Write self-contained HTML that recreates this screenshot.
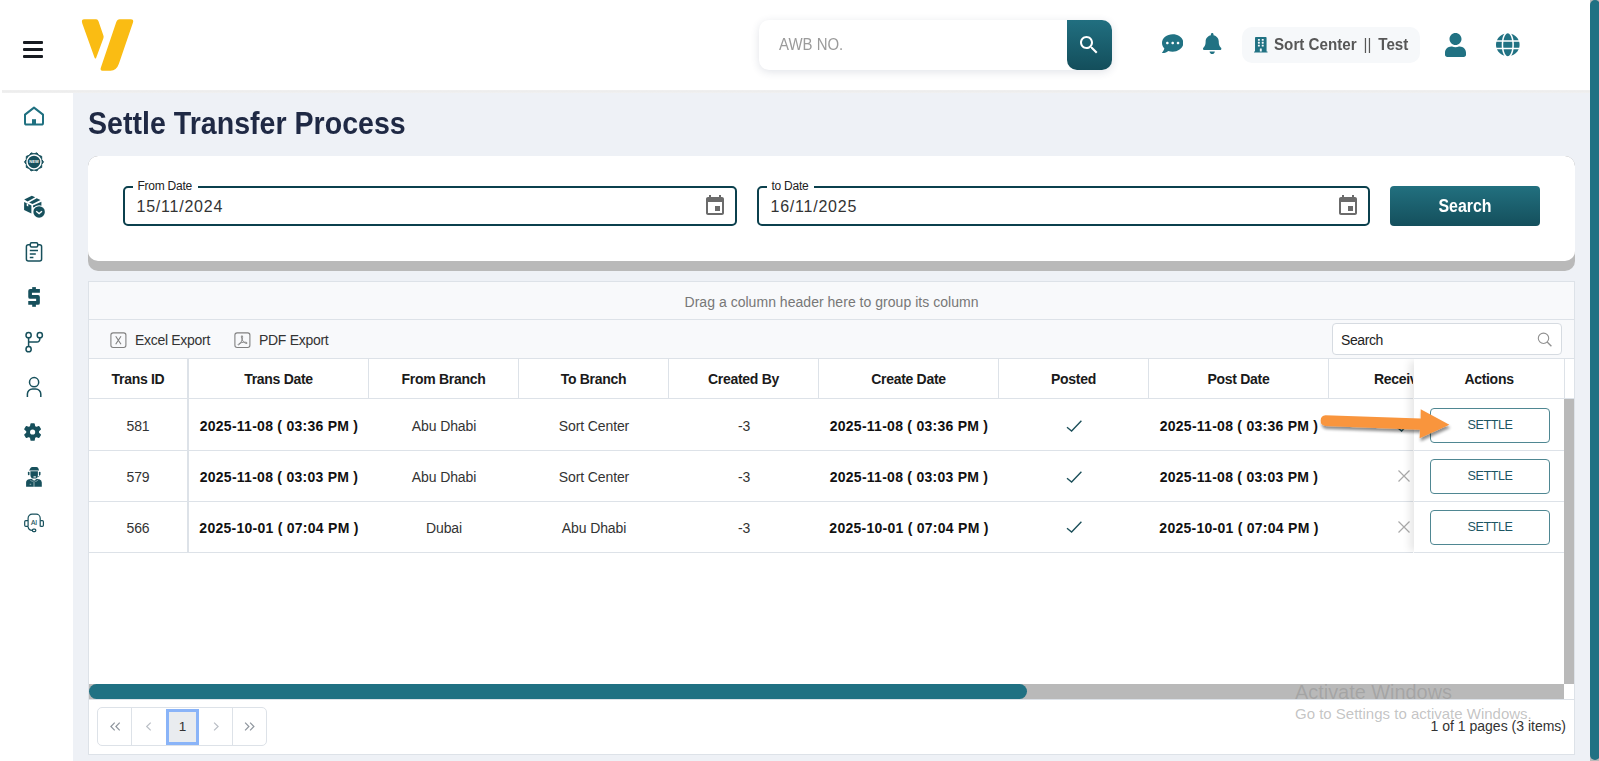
<!DOCTYPE html>
<html lang="en">
<head>
<meta charset="utf-8">
<title>Settle Transfer Process</title>
<style>
*{box-sizing:border-box;margin:0;padding:0}
html,body{width:1599px;height:761px;overflow:hidden}
body{position:relative;background:#eef1f6;font-family:"Liberation Sans",sans-serif;color:#222}
.abs{position:absolute}
/* header */
#hdr{position:absolute;left:0;top:0;width:1590px;height:90px;background:#fff;z-index:3}#hline{position:absolute;left:2px;top:90px;width:1588px;height:3px;background:linear-gradient(#f0f0f0,#ededed 45%,#f1f1f1);z-index:3}
#side{position:absolute;left:0;top:90px;width:73px;height:671px;background:#fff;z-index:2}
#side svg{position:absolute}
.bar{position:absolute;left:23px;width:20px;height:3px;background:#171b21;border-radius:1px}
#awb{position:absolute;left:759px;top:20px;width:353px;height:50px;background:#fff;border-radius:10px;box-shadow:0 2px 8px rgba(40,60,90,.14)}
#awb span{position:absolute;left:20px;top:15px;font-size:17px;color:#9b9b9b;line-height:20px;transform:scaleX(.88);transform-origin:0 50%;white-space:nowrap}
#awbbtn{position:absolute;left:1067px;top:20px;width:45px;height:50px;border-radius:0 10px 10px 10px;background:linear-gradient(#216f80,#134e5b)}
#pill{position:absolute;left:1242px;top:27px;width:178px;height:36px;border-radius:10px;background:#f6f8fa}
#pill span{position:absolute;left:32px;top:8px;font-size:17px;font-weight:bold;color:#575757;line-height:20px;white-space:nowrap;transform:scaleX(.892);transform-origin:0 50%}#pill span b{font-weight:normal;padding:0 3px}
/* page scroll */
#pscroll{position:absolute;left:1590px;top:0;width:9px;height:761px;background:#b9b9b9;z-index:5}
#pscroll i{position:absolute;left:0;top:0;width:10px;height:760px;background:#207183;border-radius:5px}
h1{position:absolute;left:88px;top:105px;font-size:31px;line-height:38px;font-weight:bold;color:#1f2944;white-space:nowrap;transform:scaleX(.922);transform-origin:0 50%}
/* filter card */
#card{position:absolute;left:88px;top:156px;width:1487px;height:115px;background:#b9b9b9;border-radius:10px;overflow:hidden}
#card>i{position:absolute;left:0;top:0;width:100%;height:105px;background:#fff;border-radius:10px 10px 10px 10px}
.fld{position:absolute;top:186px;height:40px;border:2px solid #0b404d;border-radius:5px;background:#fff}
.fld label{position:absolute;left:8px;top:-9px;padding:0 6px 0 4.5px;letter-spacing:-.25px;background:#fff;font-size:12px;line-height:14px;color:#222;white-space:nowrap}
.fld span{position:absolute;left:11.5px;top:9px;font-size:16px;line-height:20px;color:#333;letter-spacing:.77px}
.fld svg{position:absolute;right:8px;top:6px}
#sbtn{position:absolute;left:1390px;top:186px;width:150px;height:40px;border-radius:4px;background:linear-gradient(#22707f,#144f5c);color:#fff;font-weight:bold;font-size:18px;text-align:center;line-height:40px}#sbtn span{display:inline-block;transform:scaleX(.885)}
/* grid */
#grid{position:absolute;left:88px;top:281px;width:1487px;height:474px;background:#fff;border:1px solid #dde2e8}
#grp{position:absolute;left:0;top:0;width:1485px;height:38px;background:#f8f9fb;border-bottom:1px solid #dde2e8;text-align:center;font-size:14px;letter-spacing:.03px;line-height:40px;color:#777}
#tb{position:absolute;left:0;top:38px;width:1485px;height:39px;background:#f8f9fb;border-bottom:1px solid #dde2e8}
.tbt{position:absolute;top:11px;letter-spacing:-.3px;font-size:14px;line-height:18px;color:#333;white-space:nowrap}
#srch{position:absolute;left:1243px;top:3px;width:230px;height:32px;border:1px solid #d6dbe1;border-radius:4px;background:#fff}
#srch span{position:absolute;left:8px;top:7px;letter-spacing:-.4px;font-size:14px;line-height:18px;color:#222}
.hc{position:absolute;top:77px;height:40px;border-right:1px solid #dde2e8;border-bottom:1px solid #dde2e8;font-weight:bold;letter-spacing:-.3px;font-size:14px;line-height:40px;text-align:center;color:#1a1a1a;white-space:nowrap;overflow:hidden}
.c{position:absolute;height:51px;border-bottom:1px solid #dde2e8;font-size:14px;line-height:54px;text-align:center;color:#333;white-space:nowrap;overflow:hidden}
.c{letter-spacing:-.12px}.c.b{font-weight:bold;color:#111;letter-spacing:.26px}
.set{position:absolute;left:1342px;width:120px;height:35px;border:1px solid #4f8792;border-radius:4px;font-size:12.6px;letter-spacing:-.4px;line-height:33px;text-align:center;color:#1c5663;background:#fff}

#tbl{position:absolute;left:0;top:0;width:1324px;height:402px;overflow:hidden}
.hc{top:77px}
.fx{border-right:2px solid #dde2e8 !important}
.c .ic{position:absolute;line-height:0}
#act{position:absolute;left:1325px;top:77px;width:150px;height:194px;background:#fff;box-shadow:-6px 0 8px -2px rgba(0,0,0,.10);clip-path:inset(0 0 0 -14px)}
#act .ah{position:absolute;left:0;top:0;width:150px;height:40px;border-bottom:1px solid #dde2e8;font-weight:bold;letter-spacing:-.3px;font-size:14px;line-height:40px;text-align:center;color:#1a1a1a}
#act .ar{position:absolute;left:0;width:150px;border-bottom:1px solid #dde2e8}
#act .set{left:16px}
#hfill{position:absolute;left:1475px;top:77px;width:10px;height:40px;border-left:1px solid #dde2e8;border-bottom:1px solid #dde2e8;background:#fff}
#vs{position:absolute;left:1475px;top:117px;width:10px;height:285px;background:#b9b9b9}
#hs{position:absolute;left:0;top:402px;width:1475px;height:15px;background:#b9b9b9}#pgline{position:absolute;left:0;top:417px;width:1485px;height:1px;background:#dde2e8}
#hs i{position:absolute;left:0;top:0;width:938px;height:15px;border-radius:8px;background:#207183}
#pager{position:absolute;left:8px;top:425px;width:170px;height:39px;border:1px solid #dde2e8;border-radius:5px;background:#fff}
.dv{position:absolute;top:0;width:1px;height:37px;background:#dde2e8}.pg{position:absolute;top:0;width:34px;height:37px;text-align:center;line-height:35px;font-weight:normal;font-size:17px;color:#9aa0a6}
.pg.on{top:1px;width:33px;height:36px;border:3px solid #8ab4f8;background:#e9ecef;color:#333;font-size:13.5px;line-height:30px}
#pinfo{position:absolute;right:8px;top:435px;font-size:14px;line-height:18px;color:#333;white-space:nowrap}

#wm{position:absolute;left:1295px;top:680px;z-index:6;color:rgba(105,105,105,.40);white-space:nowrap}
#wm .w1{font-size:19.900px;line-height:24px;color:rgba(90,90,90,.22)}
#wm .w2{font-size:15px;line-height:20px;margin-top:0px}
</style>
</head>
<body>
<div id="hdr">
  <div class="bar" style="top:40.700px"></div><div class="bar" style="top:47.800px"></div><div class="bar" style="top:54.900px"></div>
  <svg class="abs" style="left:70px;top:10px" width="80" height="70" viewBox="70 10 80 70"><g fill="#fabc13"><path d="M84.300 19.200 L96.200 19.200 Q97.800 19.200 98.500 21.300 L103.400 35.600 Q103.900 36.900 103.400 38.200 L96.300 57.400 Q95.300 59.800 94.400 57.300 L82.300 23.400 Q80.900 19.200 84.300 19.200 Z"/><path d="M119.700 19.200 L130.700 19.200 Q134 19.200 133 22.600 L118.900 63.800 Q116.500 70.700 110.500 70.700 L102.400 70.700 Q99.800 70.700 100.900 67.600 L116.200 22.300 Q117.200 19.200 119.700 19.200 Z"/></g></svg>
  <div id="awb"><span>AWB NO.</span></div>
  <div id="awbbtn"></div>

  <svg class="abs" style="left:1076.500px;top:33.300px" width="24" height="24" viewBox="0 0 24 24"><path fill="#fff" d="M15.5 14h-.79l-.28-.27C15.41 12.590 16 11.110 16 9.500 16 5.910 13.090 3 9.500 3S3 5.910 3 9.500 5.910 16 9.500 16c1.610 0 3.090-.590 4.230-1.570l.27.280v.79l5 4.990L20.490 19l-4.990-5zm-6 0C7.010 14 5 11.990 5 9.500S7.010 5 9.500 5 14 7.010 14 9.500 11.990 14 9.500 14z"/></svg>
  <svg class="abs" style="left:1161.900px;top:32.700px" width="21.400" height="21.400" viewBox="0 0 512 512"><path fill="#217283" d="M256 32C114.6 32 0 125.1 0 240c0 49.6 21.4 95 57 130.7C44.500 421.100 2.700 466 2.200 466.500c-2.200 2.300-2.800 5.700-1.500 8.700S4.800 480 8 480c66.300 0 116-31.800 140.600-51.400 32.700 12.300 69 19.400 107.400 19.400 141.400 0 256-93.100 256-208S397.400 32 256 32zM128 272c-17.700 0-32-14.300-32-32s14.300-32 32-32 32 14.300 32 32-14.300 32-32 32zm128 0c-17.700 0-32-14.300-32-32s14.300-32 32-32 32 14.300 32 32-14.300 32-32 32zm128 0c-17.700 0-32-14.300-32-32s14.300-32 32-32 32 14.300 32 32-14.300 32-32 32z"/></svg>
  <svg class="abs" style="left:1203.300px;top:32.700px" width="18.400" height="21" viewBox="0 0 448 512"><path fill="#217283" d="M224 512c35.320 0 63.970-28.650 63.970-64H160.030c0 35.350 28.650 64 63.970 64zm215.390-149.710c-19.320-20.760-55.470-51.990-55.470-154.290 0-77.700-54.480-139.900-127.940-155.160V32c0-17.670-14.320-32-31.980-32s-31.980 14.330-31.980 32v20.840C118.560 68.100 64.080 130.300 64.080 208c0 102.300-36.150 133.530-55.470 154.290-6 6.450-8.660 14.160-8.610 21.710.110 16.400 12.980 32 32.100 32h383.800c19.120 0 32-15.600 32.100-32 .050-7.550-2.610-15.270-8.610-21.710z"/></svg>
  <svg class="abs" style="left:1444.900px;top:32.800px" width="21" height="24" viewBox="0 0 448 512"><path fill="#217283" d="M224 256c70.700 0 128-57.300 128-128S294.700 0 224 0 96 57.300 96 128s57.300 128 128 128zm89.600 32h-16.700c-22.200 10.200-46.900 16-72.900 16s-50.600-5.800-72.900-16h-16.700C60.200 288 0 348.200 0 422.400V464c0 26.500 21.500 48 48 48h352c26.500 0 48-21.500 48-48v-41.600c0-74.200-60.200-134.400-134.400-134.400z"/></svg>
  <svg class="abs" style="left:1496.400px;top:33.400px" width="23.600" height="23.600" viewBox="0 0 496 512" preserveAspectRatio="none"><path fill="#217283" d="M336.500 160C322 70.700 287.800 8 248 8s-74 62.700-88.500 152h177zM152 256c0 22.200 1.200 43.500 3.300 64h185.300c2.100-20.500 3.300-41.800 3.300-64s-1.200-43.500-3.300-64H155.300c-2.100 20.500-3.300 41.800-3.300 64zm324.700-96c-28.600-67.900-86.500-120.400-158-141.600 24.400 33.800 41.200 84.700 50 141.600h108zM177.200 18.400C105.800 39.600 47.800 92.100 19.300 160h108c8.700-56.900 25.500-107.800 49.900-141.600zM487.400 192H372.700c2.100 21 3.300 42.500 3.300 64s-1.200 43-3.300 64h114.600c5.500-20.500 8.600-41.800 8.600-64s-3.100-43.500-8.500-64zM120 256c0-21.500 1.200-43 3.300-64H8.600C3.200 212.500 0 233.800 0 256s3.200 43.500 8.600 64h114.600c-2-21-3.200-42.500-3.200-64zm39.500 96c14.500 89.300 48.700 152 88.500 152s74-62.700 88.500-152h-177zm159.300 141.600c71.400-21.200 129.400-73.700 158-141.600h-108c-8.800 56.900-25.600 107.800-50 141.600zM19.300 352c28.600 67.900 86.500 120.400 158 141.600-24.400-33.800-41.200-84.700-50-141.600h-108z"/></svg>
  <div id="pill"><span>Sort Center <b>||</b> Test</span></div>
  <svg class="abs" style="left:1254.400px;top:37.300px" width="13.600" height="15.400" viewBox="0 0 448 512"><path fill="#217283" d="M436 480h-20V24c0-13.255-10.745-24-24-24H56C42.745 0 32 10.745 32 24v456H12c-6.627 0-12 5.373-12 12v20h448v-20c0-6.627-5.373-12-12-12zM128 76c0-6.627 5.373-12 12-12h40c6.627 0 12 5.373 12 12v40c0 6.627-5.373 12-12 12h-40c-6.627 0-12-5.373-12-12V76zm0 96c0-6.627 5.373-12 12-12h40c6.627 0 12 5.373 12 12v40c0 6.627-5.373 12-12 12h-40c-6.627 0-12-5.373-12-12v-40zm52 148h-40c-6.627 0-12-5.373-12-12v-40c0-6.627 5.373-12 12-12h40c6.627 0 12 5.373 12 12v40c0 6.627-5.373 12-12 12zm76 160h-64v-84c0-6.627 5.373-12 12-12h40c6.627 0 12 5.373 12 12v84zm64-172c0 6.627-5.373 12-12 12h-40c-6.627 0-12-5.373-12-12v-40c0-6.627 5.373-12 12-12h40c6.627 0 12 5.373 12 12v40zm0-96c0 6.627-5.373 12-12 12h-40c-6.627 0-12-5.373-12-12v-40c0-6.627 5.373-12 12-12h40c6.627 0 12 5.373 12 12v40zm0-96c0 6.627-5.373 12-12 12h-40c-6.627 0-12-5.373-12-12V76c0-6.627 5.373-12 12-12h40c6.627 0 12 5.373 12 12v40z"/></svg>
</div>
<div id="hline"></div>
<div id="side">
<svg id="sideic" width="73" height="671" viewBox="0 90 73 671" style="position:absolute;left:0;top:0">
<path d="M25 114.6 L34 107.6 L43 114.6 V123 a1.6 1.6 0 0 1 -1.6 1.6 H26.6 a1.6 1.6 0 0 1 -1.6 -1.6 Z" fill="none" stroke="#1f7080" stroke-width="2" stroke-linejoin="round"/><rect x="32" y="119.2" width="4" height="5" fill="#1f7080"/>
<path d="M43.50 161.90 L41.70 164.40 L41.69 167.48 L38.76 168.45 L36.94 170.94 L34.00 170.00 L31.06 170.94 L29.24 168.45 L26.31 167.48 L26.30 164.40 L24.50 161.90 L26.30 159.40 L26.31 156.32 L29.24 155.35 L31.06 152.86 L34.00 153.80 L36.94 152.86 L38.76 155.35 L41.69 156.32 L41.70 159.40Z" fill="#17505c" stroke="#17505c" stroke-width="1" stroke-linejoin="round"/>
<circle cx="34" cy="161.9" r="7" fill="none" stroke="#fff" stroke-width="1.45"/>
<text x="34" y="162.9" font-family="Liberation Sans, sans-serif" font-weight="bold" font-size="4.4" fill="#fff" text-anchor="middle" textLength="9.4" lengthAdjust="spacingAndGlyphs">NEW</text>
<g fill="#17505c"><path d="M24.2 199.5 L31.8 195.7 L35.2 197.3 L27.6 201.5 Z"/><path d="M29.1 202.4 L36.7 198.3 L40.5 199.9 L32.5 204.1 Z"/><path d="M24.1 202 L31.4 205.4 V213.5 L24.1 210.1 Z"/><path d="M33 205.4 L41.4 201.8 V206 L37 206 L33.1 207.4 Z"/></g>
<path d="M26.7 203.2 L28.25 203.9 V206.4 L26.7 205.8 Z" fill="#fff"/>
<circle cx="39.1" cy="211.9" r="6.6" fill="#fff"/><circle cx="39.1" cy="211.9" r="5.75" fill="#17505c"/><path d="M36.2 211.2 L39.1 213.6 L42 211.2" fill="none" stroke="#fff" stroke-width="1.35"/>
<g fill="none" stroke="#17505c" stroke-width="1.5"><rect x="26.4" y="244.8" width="15.2" height="16.2" rx="2"/><rect x="30.3" y="242.8" width="7.4" height="4.2" rx="1.2" fill="#fff"/><path d="M29.8 250.6 H38 M29.8 254.1 H35.8 M29.8 257.6 H33.4"/></g>
<path d="M39.9 290.95 H30.1 V296.95 H38 V302.95 H28.25" fill="none" stroke="#17505c" stroke-width="3.7" stroke-linejoin="round"/><rect x="32.2" y="287.1" width="3.7" height="3" fill="#17505c"/><rect x="32.2" y="303.8" width="3.7" height="3" fill="#17505c"/>
<g fill="none" stroke="#17505c" stroke-width="1.5"><circle cx="28.6" cy="335.2" r="2.6"/><circle cx="39.8" cy="335.2" r="2.6"/><circle cx="28.6" cy="349.2" r="2.6"/><path d="M28.6 337.8 V346.6 M28.6 342 H37 a2.8 2.8 0 0 0 2.8 -2.8 V337.8"/></g>
<g fill="none" stroke="#17505c" stroke-width="1.5"><circle cx="34.1" cy="382.2" r="4.6"/><path d="M27.4 397 V394 a5 5 0 0 1 5 -5 H35.8 a5 5 0 0 1 5 5 V397"/></g>
<path d="M30.75 426.61 L31.23 424.02 L33.97 424.02 L34.45 426.61 L36.35 427.70 L38.83 426.82 L40.20 429.20 L38.19 430.90 L38.19 433.10 L40.20 434.80 L38.83 437.18 L36.35 436.30 L34.45 437.39 L33.97 439.98 L31.23 439.98 L30.75 437.39 L28.85 436.30 L26.37 437.18 L25.00 434.80 L27.01 433.10 L27.01 430.90 L25.00 429.20 L26.37 426.82 L28.85 427.70Z" fill="#17505c" stroke="#17505c" stroke-width="1.6" stroke-linejoin="round"/><circle cx="32.6" cy="432.0" r="2.6" fill="#fff"/>
<g fill="#17505c"><path d="M29.1 470.4 L30.5 468 Q31.1 466.9 32.4 466.9 H36.3 Q37.6 466.9 38.2 468 L39.1 470.4 Z"/><path d="M30.4 471.3 H37.9 V474.9 a3.75 3.6 0 0 1 -7.5 0 Z"/><rect x="27.9" y="471.8" width="1.6" height="3.5" rx=".7"/><rect x="38.9" y="471.8" width="1.6" height="3.5" rx=".7"/><path d="M26.1 486.8 V482.6 Q26.1 479.9 28.8 479.3 L31.5 478.7 L34.1 480.7 L36.700 478.700 L39.300 479.300 Q41.800 479.900 41.800 482.600 V486.800 Z"/></g>
<path d="M34 481.400 V486.800" stroke="#fff" stroke-opacity=".55" stroke-width="1" fill="none"/><path d="M30 479.600 Q31 481.700 33.200 481.300 M38.200 479.600 Q37.200 481.700 35 481.300" stroke="#fff" stroke-opacity=".7" stroke-width=".6" fill="none"/><path d="M39.700 475.300 Q39.500 477.200 36.200 477" stroke="#17505c" stroke-width=".7" fill="none"/><rect x="33.400" y="476.200" width="2.600" height="1.300" rx=".5" fill="#fff" fill-opacity=".85"/><rect x="29.700" y="483.800" width="1.500" height=".9" fill="#fff" fill-opacity=".6"/>
<g fill="none" stroke="#17505c" stroke-width="1.2"><path d="M28.1 526.8 V518.2 a4 4 0 0 1 4 -4 H36.2 a4 4 0 0 1 4 4 V526.6"/><path d="M28 520.700 H25.800 a1.100 1.100 0 0 0 -1.100 1.100 V525.300 a1.100 1.100 0 0 0 1.100 1.100 H28 M40.300 520.700 H42.300 a1.100 1.100 0 0 1 1.100 1.100 V525.300 a1.100 1.100 0 0 1 -1.100 1.100 H40.300"/><path d="M28.100 526.800 Q28.600 530.300 32.300 530.400"/><rect x="32.400" y="529.200" width="3.400" height="2.400" rx="1"/></g>
<text x="34.100" y="524.700" font-family="Liberation Sans, sans-serif" font-size="6.600" fill="#17505c" stroke="#17505c" stroke-width=".15" text-anchor="middle">AI</text>
</svg>
</div>
<div id="pscroll"><i></i></div>
<h1>Settle Transfer Process</h1>
<div id="card"><i></i></div>
<div class="fld" style="left:123px;width:614px"><label>From Date</label><span>15/11/2024</span><svg width="24" height="24" viewBox="0 0 24 24"><path fill="#6b6b6b" d="M17 12h-5v5h5v-5zM16 1v2H8V1H6v2H5c-1.110 0-1.990.9-1.990 2L3 19c0 1.100.890 2 2 2h14c1.100 0 2-.9 2-2V5c0-1.100-.9-2-2-2h-1V1h-2zm3 18H5V8h14v11z"/></svg></div>
<div class="fld" style="left:757px;width:613px"><label>to Date</label><span>16/11/2025</span><svg width="24" height="24" viewBox="0 0 24 24"><path fill="#6b6b6b" d="M17 12h-5v5h5v-5zM16 1v2H8V1H6v2H5c-1.110 0-1.990.9-1.990 2L3 19c0 1.100.890 2 2 2h14c1.100 0 2-.9 2-2V5c0-1.100-.9-2-2-2h-1V1h-2zm3 18H5V8h14v11z"/></svg></div>
<div id="sbtn"><span>Search</span></div>
<div id="grid">
  <div id="grp">Drag a column header here to group its column</div>
  <div id="tb">
    <svg class="abs" style="left:21px;top:12px" width="17" height="17" viewBox="0 0 17 17"><rect x=".9" y=".9" width="15" height="14.600" rx="2.200" fill="none" stroke="#808080" stroke-width="1.100"/><path d="M5.700 4.200 L11 12.300 M11 4.200 L5.700 12.300" stroke="#808080" stroke-width="1.100" fill="none"/></svg><svg class="abs" style="left:145px;top:12px" width="17" height="17" viewBox="0 0 17 17"><rect x=".9" y=".9" width="15" height="14.600" rx="2.200" fill="none" stroke="#808080" stroke-width="1.100"/><path d="M7.900 3.600 c-1 .2 -.6 2.200 .4 4.400 c1 2.200 3.600 3.900 4.700 3.400 c.9 -.6 -.8 -1.500 -3.300 -1.200 c-2.500 .3 -5.300 1.300 -5.600 2.300 c-.1 1 1.400 .3 2.600 -1.700 c1.300 -2.200 2.300 -5.400 1.800 -6.700 c-.1 -.4 -.4 -.5 -.6 -.5z" fill="none" stroke="#808080" stroke-width=".9"/></svg><span class="tbt" style="left:46px">Excel Export</span>
    <span class="tbt" style="left:170px">PDF Export</span>
    <div id="srch"><span>Search</span><svg class="abs" style="left:203px;top:7px" width="18" height="18" viewBox="0 0 18 18"><circle cx="7.500" cy="7.300" r="5.200" fill="none" stroke="#909090" stroke-width="1.100"/><path d="M11.200 11 L15.400 15.200" stroke="#909090" stroke-width="1.300"/></svg></div>
  </div>
<div id="tbl">
<div class="hc fx" style="left:0px;width:100px"><span>Trans ID</span></div>
<div class="hc" style="left:100px;width:180px"><span>Trans Date</span></div>
<div class="hc" style="left:280px;width:150px"><span>From Branch</span></div>
<div class="hc" style="left:430px;width:150px"><span>To Branch</span></div>
<div class="hc" style="left:580px;width:150px"><span>Created By</span></div>
<div class="hc" style="left:730px;width:180px"><span>Create Date</span></div>
<div class="hc" style="left:910px;width:150px"><span>Posted</span></div>
<div class="hc" style="left:1060px;width:180px"><span>Post Date</span></div>
<div class="hc" style="left:1240px;width:150px"><span>Received</span></div>
<div class="c fx" style="left:0px;top:117px;width:100px;height:52px;line-height:55px"><span>581</span></div>
<div class="c b" style="left:100px;top:117px;width:180px;height:52px;line-height:55px"><span>2025-11-08 ( 03:36 PM )</span></div>
<div class="c" style="left:280px;top:117px;width:150px;height:52px;line-height:55px"><span>Abu Dhabi</span></div>
<div class="c" style="left:430px;top:117px;width:150px;height:52px;line-height:55px"><span>Sort Center</span></div>
<div class="c" style="left:580px;top:117px;width:150px;height:52px;line-height:55px"><span>-3</span></div>
<div class="c b" style="left:730px;top:117px;width:180px;height:52px;line-height:55px"><span>2025-11-08 ( 03:36 PM )</span></div>
<div class="c" style="left:910px;top:117px;width:150px;height:52px;line-height:55px"><i class="ic" style="left:67px;top:20.5px"><svg width="16" height="12" viewBox="0 0 16 12"><path d="M1 7.2 L5.6 11 L15.4 0.8" fill="none" stroke="#1c4f5a" stroke-width="1.35"/></svg></i></div>
<div class="c b" style="left:1060px;top:117px;width:180px;height:52px;line-height:55px"><span>2025-11-08 ( 03:36 PM )</span></div>
<div class="c" style="left:1240px;top:117px;width:150px;height:52px;line-height:55px"><i class="ic" style="left:67px;top:20.5px"><svg width="16" height="12" viewBox="0 0 16 12"><path d="M1 7.2 L5.6 11 L15.4 0.8" fill="none" stroke="#1c4f5a" stroke-width="1.35"/></svg></i></div>
<div class="c fx" style="left:0px;top:169px;width:100px;height:51px;line-height:53px"><span>579</span></div>
<div class="c b" style="left:100px;top:169px;width:180px;height:51px;line-height:53px"><span>2025-11-08 ( 03:03 PM )</span></div>
<div class="c" style="left:280px;top:169px;width:150px;height:51px;line-height:53px"><span>Abu Dhabi</span></div>
<div class="c" style="left:430px;top:169px;width:150px;height:51px;line-height:53px"><span>Sort Center</span></div>
<div class="c" style="left:580px;top:169px;width:150px;height:51px;line-height:53px"><span>-3</span></div>
<div class="c b" style="left:730px;top:169px;width:180px;height:51px;line-height:53px"><span>2025-11-08 ( 03:03 PM )</span></div>
<div class="c" style="left:910px;top:169px;width:150px;height:51px;line-height:53px"><i class="ic" style="left:67px;top:19.6px"><svg width="16" height="12" viewBox="0 0 16 12"><path d="M1 7.2 L5.6 11 L15.4 0.8" fill="none" stroke="#1c4f5a" stroke-width="1.35"/></svg></i></div>
<div class="c b" style="left:1060px;top:169px;width:180px;height:51px;line-height:53px"><span>2025-11-08 ( 03:03 PM )</span></div>
<div class="c" style="left:1240px;top:169px;width:150px;height:51px;line-height:53px"><i class="ic" style="left:68.8px;top:19.4px"><svg width="12" height="12" viewBox="0 0 12 12"><path d="M0.5 0.5 L11.5 11.5 M11.5 0.5 L0.5 11.5" fill="none" stroke="#a9a9a9" stroke-width="1.2"/></svg></i></div>
<div class="c fx" style="left:0px;top:220px;width:100px;height:51px;line-height:53px"><span>566</span></div>
<div class="c b" style="left:100px;top:220px;width:180px;height:51px;line-height:53px"><span>2025-10-01 ( 07:04 PM )</span></div>
<div class="c" style="left:280px;top:220px;width:150px;height:51px;line-height:53px"><span>Dubai</span></div>
<div class="c" style="left:430px;top:220px;width:150px;height:51px;line-height:53px"><span>Abu Dhabi</span></div>
<div class="c" style="left:580px;top:220px;width:150px;height:51px;line-height:53px"><span>-3</span></div>
<div class="c b" style="left:730px;top:220px;width:180px;height:51px;line-height:53px"><span>2025-10-01 ( 07:04 PM )</span></div>
<div class="c" style="left:910px;top:220px;width:150px;height:51px;line-height:53px"><i class="ic" style="left:67px;top:19.3px"><svg width="16" height="12" viewBox="0 0 16 12"><path d="M1 7.2 L5.6 11 L15.4 0.8" fill="none" stroke="#1c4f5a" stroke-width="1.35"/></svg></i></div>
<div class="c b" style="left:1060px;top:220px;width:180px;height:51px;line-height:53px"><span>2025-10-01 ( 07:04 PM )</span></div>
<div class="c" style="left:1240px;top:220px;width:150px;height:51px;line-height:53px"><i class="ic" style="left:68.8px;top:19.3px"><svg width="12" height="12" viewBox="0 0 12 12"><path d="M0.5 0.5 L11.5 11.5 M11.5 0.5 L0.5 11.5" fill="none" stroke="#a9a9a9" stroke-width="1.2"/></svg></i></div>
</div>
<div id="act">
  <div class="ah"><span>Actions</span></div>
  <div class="ar" style="top:40px;height:52px"><div class="set" style="top:9px">SETTLE</div></div>
  <div class="ar" style="top:92px;height:51px"><div class="set" style="top:8px">SETTLE</div></div>
  <div class="ar" style="top:143px;height:51px"><div class="set" style="top:8px">SETTLE</div></div>
</div>
<div id="hfill"></div>
<div id="vs"></div>
<div id="hs"><i></i></div><div id="pgline"></div>
<div id="pager"><i class="dv" style="left:32.5px"></i><i class="dv" style="left:134px"></i><b class="pg on" style="left:68px">1</b><svg class="abs" style="left:0;top:0" width="170" height="37" viewBox="97.5 708 170 37" fill="none" stroke-width="1.2"><path stroke="#8f969e" d="M114.2 722.6 L110.4 726.5 L114.2 730.4 M119.2 722.6 L115.400 726.500 L119.200 730.400 M244.600 722.600 L248.400 726.500 L244.600 730.400 M249.600 722.600 L253.400 726.500 L249.600 730.400"/><path stroke="#b9bec5" d="M150.200 722.600 L146.200 726.500 L150.200 730.400 M213.600 722.600 L217.600 726.500 L213.600 730.400"/></svg></div>
<div id="pinfo">1 of 1 pages (3 items)</div>
</div>
<svg id="arrow" class="abs" style="left:1310px;top:400px;z-index:4" width="150" height="50" viewBox="1310 400 150 50"><defs><filter id="ash" x="-10%" y="-30%" width="120%" height="170%"><feGaussianBlur in="SourceAlpha" stdDeviation="1.600"/><feOffset dx="1" dy="2.500" result="o"/><feComponentTransfer><feFuncA type="linear" slope=".45"/></feComponentTransfer><feMerge><feMergeNode/><feMergeNode in="SourceGraphic"/></feMerge></filter></defs><path filter="url(#ash)" fill="#f9953e" d="M1325.500 415.200 L1420.700 418.600 L1420.700 409.200 L1449.400 424.700 L1419.600 438.200 L1420 429.800 L1325.200 425.900 a5.400 5.400 0 0 1 .3 -10.700 Z"/></svg>
<div id="wm"><div class="w1">Activate Windows</div><div class="w2">Go to Settings to activate Windows.</div></div>
</body>
</html>
